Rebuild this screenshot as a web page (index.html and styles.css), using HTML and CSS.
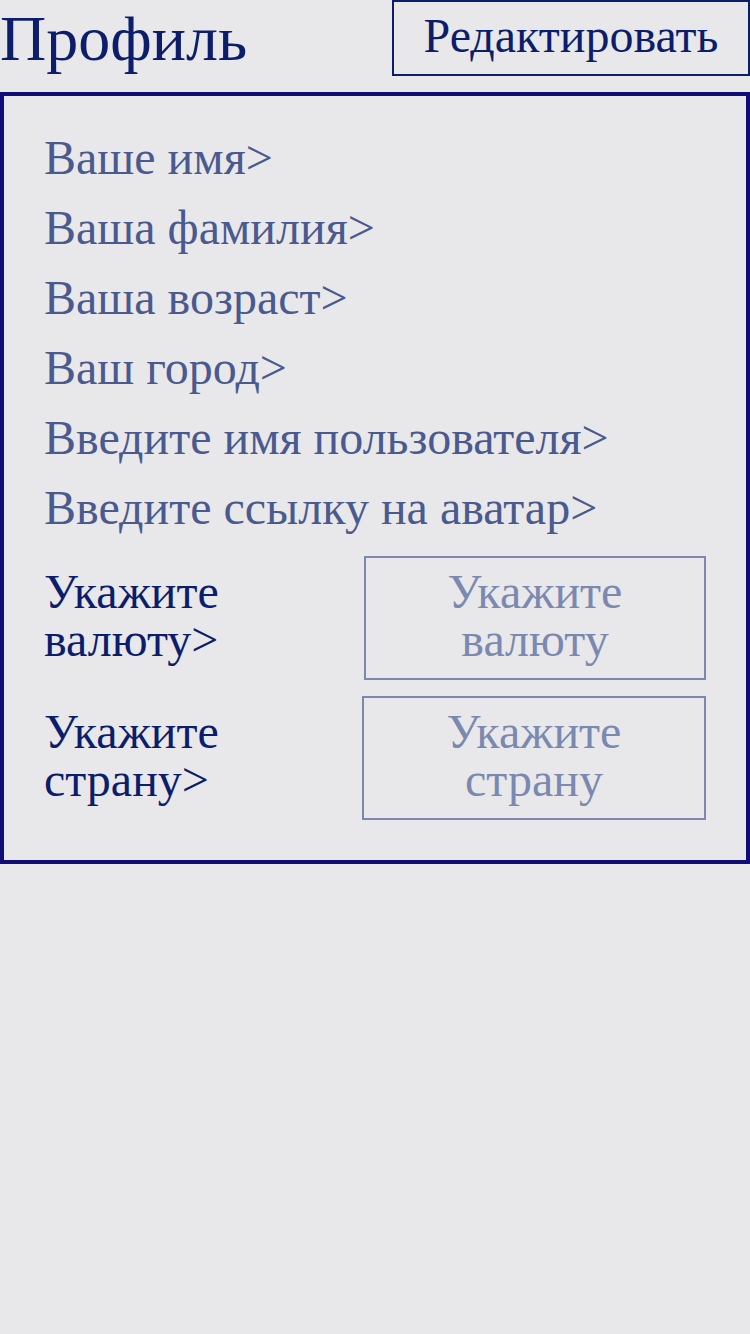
FILE: index.html
```html
<!DOCTYPE html>
<html lang="ru">
<head>
<meta charset="utf-8">
<title>Профиль</title>
<link rel="stylesheet" href="styles.css">
</head>
<body>
<div class="page">
  <header class="header">
    <h1 class="title">Профиль</h1>
    <button class="edit-btn">Редактировать</button>
  </header>
  <section class="card">
    <ul class="fields">
      <li class="field">Ваше имя&gt;</li>
      <li class="field">Ваша фамилия&gt;</li>
      <li class="field">Ваша возраст&gt;</li>
      <li class="field">Ваш город&gt;</li>
      <li class="field">Введите имя пользователя&gt;</li>
      <li class="field">Введите ссылку на аватар&gt;</li>
    </ul>
    <div class="select-row">
      <div class="select-label">Укажите<br>валюту&gt;</div>
      <div class="select-box">Укажите<br>валюту</div>
    </div>
    <div class="select-row">
      <div class="select-label">Укажите<br>страну&gt;</div>
      <div class="select-box select-box-wide">Укажите<br>страну</div>
    </div>
  </section>
</div>
</body>
</html>
```
FILE: styles.css
```css
html, body {
  margin: 0;
  padding: 0;
  background: #e8e8ea;
}
body {
  font-family: "Liberation Serif", "Times New Roman", serif;
  width: 750px;
  height: 1334px;
}
.header {
  display: flex;
  justify-content: space-between;
  align-items: flex-start;
  height: 76px;
}
.title {
  margin: 0;
  font-size: 64px;
  font-weight: normal;
  line-height: 78px;
  color: #0b1d6b;
}
.edit-btn {
  box-sizing: border-box;
  height: 76px;
  width: 358px;
  margin: 0;
  padding: 0 0 4px 0;
  border: 2px solid #0b1d6b;
  background: transparent;
  font-family: inherit;
  font-size: 48px;
  color: #0b1d6b;
  line-height: 66px;
}
.card {
  margin-top: 16px;
  border: 4px solid #100c78;
  padding: 27px 40px 40px 40px;
}
.fields {
  list-style: none;
  margin: 0;
  padding: 0;
}
.field {
  font-size: 48px;
  line-height: 70px;
  color: #4a5a8f;
}
.select-row {
  display: flex;
  align-items: center;
  justify-content: space-between;
  margin-top: 13px;
}
.select-row + .select-row {
  margin-top: 16px;
}
.select-label {
  font-size: 48px;
  line-height: 48px;
  padding-bottom: 4px;
  color: #0b1d6b;
}
.select-box {
  box-sizing: border-box;
  width: 342px;
  height: 124px;
  padding-bottom: 4px;
  border: 2px solid #7b88b0;
  display: flex;
  align-items: center;
  justify-content: center;
  text-align: center;
  font-size: 48px;
  line-height: 48px;
  color: #7b88b0;
}
.select-box-wide {
  width: 344px;
}
```
